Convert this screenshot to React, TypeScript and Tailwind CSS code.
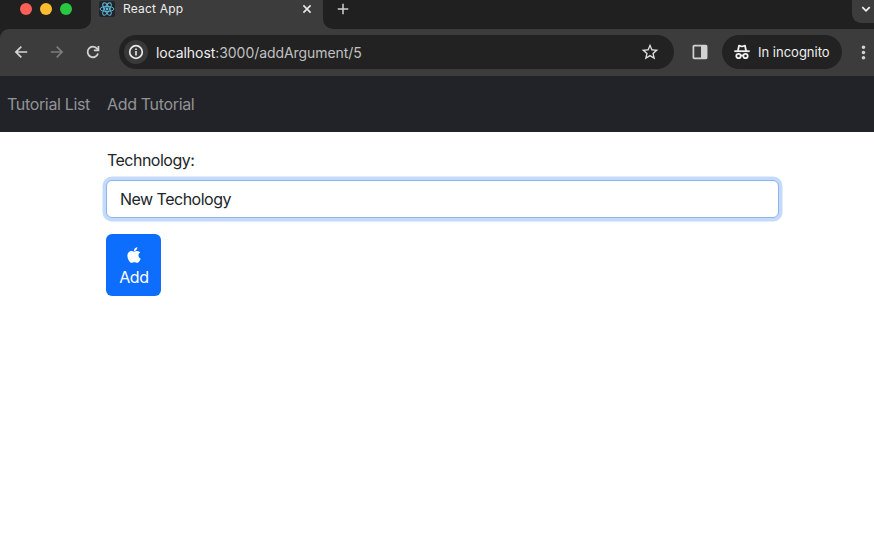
import React from "react";
import { MdStarOutline, MdAdd, MdMoreVert } from "react-icons/md";
import { FaApple } from "react-icons/fa";

function Glyph({ className, children }: { className: string; children: React.ReactNode }) {
  return (
    <svg width="18" height="18" viewBox="0 0 18 18" fill="none" stroke="currentColor" strokeWidth="1.8" className={`shrink-0 ${className}`}>
      {children}
    </svg>
  );
}

function ReactLogo() {
  return (
    <svg width="16" height="16" viewBox="0 0 16 16" className="shrink-0 rounded-[2px] bg-[#20252c]">
      <g fill="none" stroke="#61b9d8" strokeWidth="0.95">
        <ellipse cx="8" cy="8" rx="6.9" ry="2.6" />
        <ellipse cx="8" cy="8" rx="6.9" ry="2.6" transform="rotate(60 8 8)" />
        <ellipse cx="8" cy="8" rx="6.9" ry="2.6" transform="rotate(120 8 8)" />
      </g>
      <circle cx="8" cy="8" r="1.4" fill="#61b9d8" />
    </svg>
  );
}

function Incognito() {
  return (
    <svg width="16" height="16" viewBox="0 0 16 16" fill="none" stroke="#f1f1f1" strokeWidth="1.8">
      <path d="M0.3 7.2H15.7" />
      <path d="M3.9 7L5 1.7L8 2.5L11 1.7L12.1 7" strokeLinejoin="round" />
      <circle cx="4.5" cy="12" r="2.2" />
      <circle cx="11.5" cy="12" r="2.2" />
      <path d="M6.6 11.8Q8 10.9 9.4 11.8" />
    </svg>
  );
}

function SidePanel() {
  return (
    <svg width="16" height="16" viewBox="0 0 16 16">
      <rect x="1.4" y="1.6" width="13.2" height="12.8" rx="0.8" fill="none" stroke="#d2d2d2" strokeWidth="1.7" />
      <path d="M9 1h6v14H9z" fill="#d2d2d2" />
    </svg>
  );
}

function TabStrip() {
  return (
    <div className="flex h-[29px] bg-[#3c3c3c]">
      <div className="flex h-full w-[91px] gap-2 rounded-br-[10px] bg-[#202020] pl-5 pt-[3px]">
        <span className="size-3 rounded-full bg-[#fe5f57]" />
        <span className="size-3 rounded-full bg-[#febc2e]" />
        <span className="size-3 rounded-full bg-[#28c840]" />
      </div>
      <div className="flex h-[18px] w-[232px] items-center pl-2">
        <ReactLogo />
        <span className="ml-2 whitespace-nowrap text-[12px] leading-[18px] tracking-[0.2px] text-[#eeeeee]">React App</span>
        <Glyph className="ml-auto mr-[7px] text-[#e8e8e8]">
          <path d="M5.4 5.4L12.6 12.6M12.6 5.4L5.4 12.6" strokeWidth="1.6" />
        </Glyph>
      </div>
      <div className="flex h-full flex-1 justify-between rounded-bl-[10px] bg-[#202020] pl-[11px]">
        <MdAdd size={18} className="text-[#cfcfcf]" />
        <div className="h-[23px] w-[22px] rounded-bl-[9px] bg-[#3c3c3c] pl-[5px]">
          <Glyph className="text-[#f0f0f0]">
            <path d="M5.3 7.2L9 10.8L12.7 7.2" />
          </Glyph>
        </div>
      </div>
    </div>
  );
}

function Toolbar() {
  return (
    <div className="bg-[#202020]">
      <div className="flex h-[47px] items-center rounded-tl-[9px] bg-[#3c3c3c] pb-px pl-3">
        <Glyph className="text-[#d6d6d6]">
          <path d="M15.2 9H4M9.3 3.6L3.9 9L9.3 14.4" strokeWidth="1.7" />
        </Glyph>
        <Glyph className="ml-[18px] text-[#7c7c7c]">
          <path d="M2.8 9H14M8.7 3.6L14.1 9L8.7 14.4" strokeWidth="1.7" />
        </Glyph>
        <Glyph className="ml-[18px] text-[#d2d2d2]">
          <path d="M14 10.4A5.3 5.3 0 1 1 13.1 5.7L14.4 7.2" />
          <path d="M14.4 2.9V7.4H9.9" />
        </Glyph>
        <div className="ml-[17px] flex h-[34px] w-[555px] shrink-0 items-center rounded-full bg-[#222222] pl-[5px] pr-[14px]">
          <div className="flex size-6 items-center justify-center rounded-full bg-[#393939]">
            <Glyph className="text-[#e9e9e9]">
              <circle cx="9" cy="9" r="6.3" strokeWidth="1.7" />
              <path d="M9 8.1V12.4M9 5.4V7" strokeWidth="1.6" />
            </Glyph>
          </div>
          <span className="ml-2 whitespace-nowrap text-[14px] tracking-[-0.06px] text-[#c0c0c0]">
            <span className="text-[#eeeeee]">localhost</span>:3000/addArgument/5
          </span>
          <MdStarOutline size={20} className="ml-auto text-[#e0e0e0]" />
        </div>
        <div className="ml-[18px] shrink-0"><SidePanel /></div>
        <div className="ml-[14px] flex h-[34px] w-[120px] shrink-0 items-center gap-2 rounded-full bg-[#222222] pl-3">
          <Incognito />
          <span className="whitespace-nowrap pt-px text-[13px] text-[#eeeeee]">In incognito</span>
        </div>
        <MdMoreVert size={21} className="ml-[11px] shrink-0 text-[#d2d2d2]" />
      </div>
    </div>
  );
}

export default function App() {
  return (
    <div className="h-[538px] w-[874px] overflow-hidden bg-white font-['Inter','Liberation_Sans',sans-serif]">
      <TabStrip />
      <Toolbar />
      <nav className="flex h-14 items-center gap-4 bg-[#222328] pl-[7px] text-[16px] tracking-[-0.34px] text-[#929395]">
        <a className="w-[84px] whitespace-nowrap">Tutorial List</a>
        <a className="whitespace-nowrap">Add Tutorial</a>
      </nav>
      <main className="ml-[106.4px] w-[672.2px] pt-4 text-[16px] leading-6 tracking-[-0.5px] text-[#212529]">
        <label htmlFor="technology" className="block pl-[0.5px]">Technology:</label>
        <input
          id="technology"
          defaultValue="New Techology"
          className="mt-2 block h-[38px] w-full rounded-md border border-[#8fb4e8] bg-white px-[12.5px] tracking-[-0.5px] text-[#212529] shadow-[0_0_0_3.5px_#c4dafc] outline-none"
        />
        <button className="mt-4 flex h-[62px] w-[55px] flex-col items-center rounded-md bg-[#0d6efd] pt-3 tracking-[-0.5px] text-white">
          <FaApple size={18} className="mb-px" />
          <span className="leading-6">Add</span>
        </button>
      </main>
    </div>
  );
}
